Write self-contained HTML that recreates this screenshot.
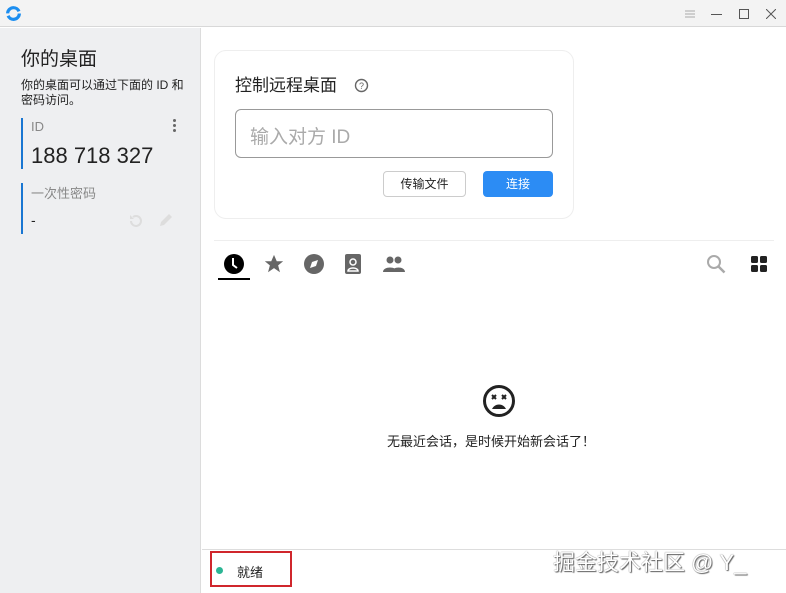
<!DOCTYPE html>
<html><head><meta charset="utf-8"><style>
*{margin:0;padding:0;box-sizing:border-box}
body{width:786px;height:593px;overflow:hidden;background:#fff;font-family:"Liberation Sans","Noto Sans CJK SC",sans-serif;position:relative;color:#222}
.abs{position:absolute}
</style></head><body>
<div class="abs" style="left:0;top:0;width:786px;height:27px;background:#f3f3f3;border-bottom:1px solid #d8d8d8"></div>
<svg class="abs" style="left:5px;top:5px" width="17" height="17" viewBox="0 0 16 16"><circle cx="8" cy="8" r="5.5" fill="none" stroke="#1c8ef0" stroke-width="3" stroke-dasharray="15 2.3"/></svg>
<svg class="abs" style="left:684px;top:8px" width="12" height="12"><path d="M1 3h10M1 6h10M1 9h10" stroke="#aaa" stroke-width="1"/></svg>
<div class="abs" style="left:711px;top:14px;width:11px;height:1px;background:#555"></div>
<div class="abs" style="left:739px;top:9px;width:10px;height:10px;border:1px solid #555"></div>
<svg class="abs" style="left:766px;top:9px" width="10" height="10"><path d="M0 0L10 10M10 0L0 10" stroke="#555" stroke-width="1"/></svg>

<div class="abs" style="left:0;top:28px;width:201px;height:565px;background:#eeeff1;border-right:1px solid #dcdcdc"></div>
<div class="abs" style="left:21px;top:44px;font-size:19px;color:#222">你的桌面</div>
<div class="abs" style="left:21px;top:78px;font-size:12px;line-height:15px;color:#222;width:175px">你的桌面可以通过下面的 ID 和<br>密码访问。</div>
<div class="abs" style="left:21px;top:118px;width:2px;height:51px;background:#1976d2"></div>
<div class="abs" style="left:31px;top:119px;font-size:13px;color:#888">ID</div>
<div class="abs" style="left:173px;top:119px;width:4px;font-size:0"><div style="width:3px;height:3px;background:#666;border-radius:50%;margin-bottom:2px"></div><div style="width:3px;height:3px;background:#666;border-radius:50%;margin-bottom:2px"></div><div style="width:3px;height:3px;background:#666;border-radius:50%"></div></div>
<div class="abs" style="left:31px;top:143px;font-size:22px;color:#222">188 718 327</div>
<div class="abs" style="left:21px;top:183px;width:2px;height:51px;background:#1976d2"></div>
<div class="abs" style="left:31px;top:183px;font-size:13px;color:#888">一次性密码</div>
<div class="abs" style="left:31px;top:212px;font-size:14px;color:#222">-</div>
<svg class="abs" style="left:127px;top:212px" width="18" height="18" viewBox="0 0 18 18"><path d="M4 9a5 5 0 1 0 2-4" fill="none" stroke="#ddd" stroke-width="2"/><path d="M3 3v4h4" fill="#ddd"/></svg>
<svg class="abs" style="left:157px;top:211px" width="18" height="18" viewBox="0 0 18 18"><path d="M3 15l1-4 8-8 3 3-8 8z" fill="#ddd"/></svg>

<div class="abs" style="left:214px;top:50px;width:360px;height:169px;border:1px solid #eee;border-radius:12px;background:#fff"></div>
<div class="abs" style="left:235px;top:71px;font-size:17px;color:#222">控制远程桌面</div>
<svg class="abs" style="left:354px;top:78px" width="15" height="15"><circle cx="7.5" cy="7.5" r="6" fill="none" stroke="#666" stroke-width="1.4"/><text x="7.5" y="11" font-size="9" text-anchor="middle" fill="#666" font-family="Liberation Sans">?</text></svg>
<div class="abs" style="left:235px;top:109px;width:318px;height:49px;border:1px solid #999;border-radius:6px"></div>
<div class="abs" style="left:250px;top:122px;font-size:19px;color:#aaa">输入对方 ID</div>
<div class="abs" style="left:383px;top:171px;width:83px;height:26px;border:1px solid #ccc;border-radius:4px;font-size:12px;text-align:center;line-height:24px">传输文件</div>
<div class="abs" style="left:483px;top:171px;width:70px;height:26px;background:#2c8cf4;border-radius:4px;font-size:12px;color:#fff;text-align:center;line-height:26px">连接</div>

<div class="abs" style="left:214px;top:240px;width:560px;height:1px;background:#eee"></div>
<svg class="abs" style="left:223px;top:253px" width="22" height="22" viewBox="0 0 22 22"><circle cx="11" cy="11" r="10" fill="#000"/><path d="M10 5v7l4 3" stroke="#fff" stroke-width="2" fill="none"/></svg>
<div class="abs" style="left:218px;top:278px;width:32px;height:2px;background:#000"></div>
<svg class="abs" style="left:263px;top:253px" width="22" height="22" viewBox="0 0 24 24"><path d="M12 2l3 7h7l-5.5 4.5 2 7.5L12 16.5 5.5 21l2-7.5L2 9h7z" fill="#666"/></svg>
<svg class="abs" style="left:303px;top:253px" width="22" height="22" viewBox="0 0 22 22"><circle cx="11" cy="11" r="10" fill="#666"/><path d="M15 7l-2 6-6 2 2-6z" fill="#fff"/></svg>
<svg class="abs" style="left:344px;top:253px" width="18" height="22" viewBox="0 0 18 22"><rect x="1" y="1" width="16" height="20" rx="2" fill="#666"/><circle cx="9" cy="9" r="3" fill="none" stroke="#fff" stroke-width="1.5"/><path d="M4 18c0-4 10-4 10 0z" fill="none" stroke="#fff" stroke-width="1.5"/></svg>
<svg class="abs" style="left:382px;top:255px" width="24" height="18" viewBox="0 0 24 18"><circle cx="8" cy="5" r="3.5" fill="#666"/><circle cx="16" cy="5" r="3.5" fill="#666"/><path d="M1 17c0-6 14-6 14 0zM10 17c0-6 13-6 13 0z" fill="#666"/></svg>
<svg class="abs" style="left:706px;top:254px" width="20" height="20" viewBox="0 0 20 20"><circle cx="8" cy="8" r="6" fill="none" stroke="#aaa" stroke-width="2"/><path d="M12.5 12.5l6 6" stroke="#aaa" stroke-width="2.5"/></svg>
<svg class="abs" style="left:751px;top:256px" width="16" height="16"><rect x="0" y="0" width="7" height="7" rx="1.5" fill="#222"/><rect x="9" y="0" width="7" height="7" rx="1.5" fill="#222"/><rect x="0" y="9" width="7" height="7" rx="1.5" fill="#222"/><rect x="9" y="9" width="7" height="7" rx="1.5" fill="#222"/></svg>

<svg class="abs" style="left:482px;top:384px" width="34" height="34" viewBox="0 0 34 34"><circle cx="17" cy="17" r="14.5" fill="none" stroke="#222" stroke-width="3"/><path d="M10 11l4 4M14 11l-4 4M20 11l4 4M24 11l-4 4" stroke="#222" stroke-width="2"/><path d="M10 25c3-6 11-6 14 0z" fill="#222"/></svg>
<div class="abs" style="left:387px;top:431px;font-size:13px;color:#222">无最近会话，是时候开始新会话了！</div>

<div class="abs" style="left:202px;top:549px;width:584px;height:1px;background:#ddd"></div>
<div class="abs" style="left:210px;top:551px;width:82px;height:36px;border:2px solid #d0262c"></div>
<div class="abs" style="left:216px;top:567px;width:7px;height:7px;border-radius:50%;background:#2bb594"></div>
<div class="abs" style="left:237px;top:562px;font-size:13px;color:#222">就绪</div>
<div class="abs" style="left:553px;top:545px;font-size:22px;color:#fff;text-shadow:0 0 1px #444,1px 1px 1px #666">掘金技术社区 @ Y_</div>
</body></html>
